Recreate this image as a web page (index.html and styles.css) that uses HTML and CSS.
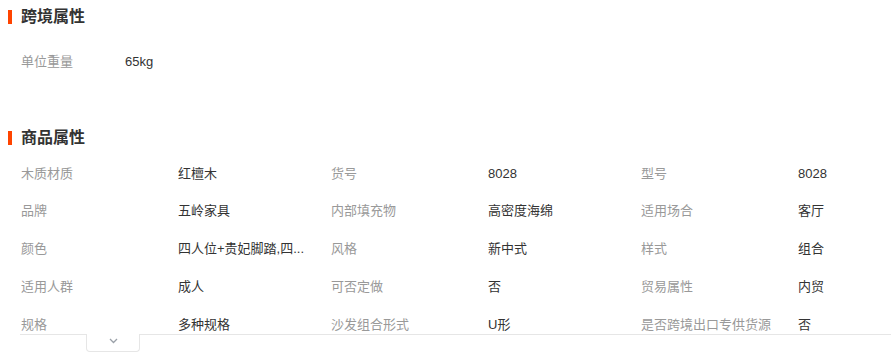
FILE: index.html
```html
<!DOCTYPE html>
<html lang="zh-CN">
<head>
<meta charset="utf-8">
<title>属性</title>
<link rel="stylesheet" href="styles.css">
</head>
<body>
<div class="page">
  <section class="section section-first">
    <h2 class="section-title"><span class="bar"></span><span>跨境属性</span></h2>
    <div class="attr-list attr-list-single">
      <div class="attr"><span class="label label-narrow">单位重量</span><span class="value">65kg</span></div>
    </div>
  </section>

  <section class="section section-second">
    <h2 class="section-title"><span class="bar"></span><span>商品属性</span></h2>
    <div class="attr-clip">
      <div class="attr-grid">
        <div class="attr"><span class="label">木质材质</span><span class="value">红檀木</span></div>
        <div class="attr"><span class="label">货号</span><span class="value">8028</span></div>
        <div class="attr"><span class="label">型号</span><span class="value">8028</span></div>

        <div class="attr"><span class="label">品牌</span><span class="value">五岭家具</span></div>
        <div class="attr"><span class="label">内部填充物</span><span class="value">高密度海绵</span></div>
        <div class="attr"><span class="label">适用场合</span><span class="value">客厅</span></div>

        <div class="attr"><span class="label">颜色</span><span class="value" title="四人位+贵妃脚踏,四人位+单人位">四人位+贵妃脚踏,四...</span></div>
        <div class="attr"><span class="label">风格</span><span class="value">新中式</span></div>
        <div class="attr"><span class="label">样式</span><span class="value">组合</span></div>

        <div class="attr"><span class="label">适用人群</span><span class="value">成人</span></div>
        <div class="attr"><span class="label">可否定做</span><span class="value">否</span></div>
        <div class="attr"><span class="label">贸易属性</span><span class="value">内贸</span></div>

        <div class="attr attr-last"><span class="label">规格</span><span class="value">多种规格</span></div>
        <div class="attr attr-last"><span class="label">沙发组合形式</span><span class="value">U形</span></div>
        <div class="attr attr-last"><span class="label">是否跨境出口专供货源</span><span class="value">否</span></div>
      </div>
    </div>
    <div class="toggle-bar">
      <button class="toggle-btn" type="button" aria-label="展开">
        <svg width="9" height="6" viewBox="0 0 9 6"><path d="M1 1 L4.5 4.5 L8 1" fill="none" stroke="#9aa0a8" stroke-width="1.3"/></svg>
      </button>
    </div>
  </section>
</div>
</body>
</html>
```

FILE: styles.css
```css
* { box-sizing: border-box; }
html, body {
  margin: 0;
  padding: 0;
  background: #fff;
}
body {
  font-family: "Liberation Sans", "Noto Sans CJK SC", sans-serif;
  font-size: 13px;
  color: #333;
  overflow: hidden;
}
.page {
  width: 100%;
}
.section-first {
  padding-top: 6px;
}
.section-second {
  margin-top: 46px;
}
.section-title {
  display: flex;
  align-items: center;
  margin: 0;
  height: 22px;
  line-height: 22px;
  font-size: 16px;
  font-weight: bold;
  color: #333;
}
.bar {
  display: inline-block;
  width: 4px;
  height: 14px;
  margin-left: 8px;
  margin-right: 9px;
  background: #ff4400;
}
.attr-list-single {
  padding-top: 15px;
  padding-left: 21px;
}
.attr {
  display: flex;
  align-items: center;
  height: 37.75px;
  line-height: 18px;
  min-width: 0;
}
.attr-last {
  height: 28px;
  align-items: flex-start;
  padding-top: 10px;
}
.label {
  flex: 0 0 157px;
  color: #999;
  white-space: nowrap;
}
.label-narrow {
  flex-basis: 104px;
}
.value {
  flex: 1 1 auto;
  min-width: 0;
  color: #333;
  white-space: nowrap;
  overflow: hidden;
  padding-right: 20px;
}
.attr-clip {
  margin-top: 6px;
  height: 179px;
}
.attr-grid {
  display: grid;
  grid-template-columns: 310px 310px minmax(0, 1fr);
  padding-left: 21px;
}
.toggle-bar {
  margin-left: 20px;
  border-top: 1px solid #e6e6e6;
}
.toggle-btn {
  display: flex;
  align-items: center;
  justify-content: center;
  margin: -1px 0 0 66px;
  width: 54px;
  height: 18px;
  padding: 0 0 2px;
  background: #fff;
  border: 1px solid #e6e6e6;
  border-top: none;
  border-radius: 0 0 4px 4px;
  cursor: pointer;
}
```
